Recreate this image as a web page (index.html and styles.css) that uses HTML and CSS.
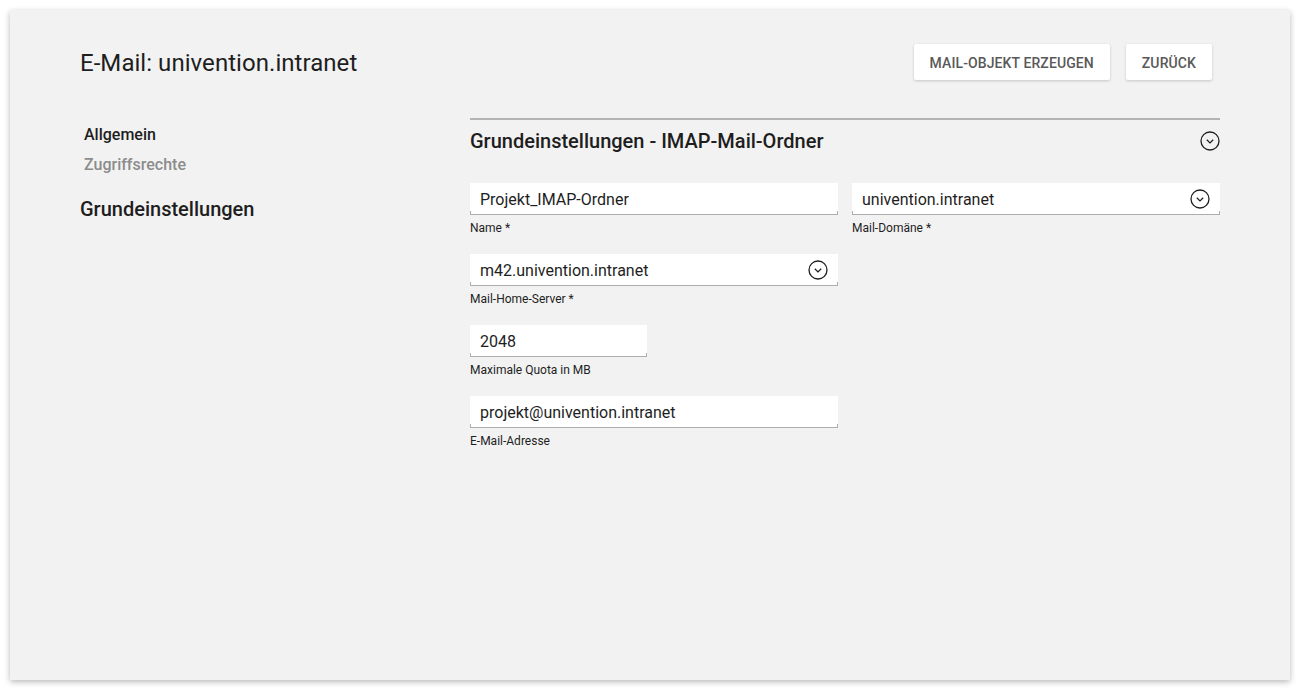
FILE: index.html
```html
<!DOCTYPE html>
<html lang="de">
<head>
<meta charset="utf-8">
<title>E-Mail: univention.intranet</title>
<link rel="stylesheet" href="styles.css">
</head>
<body>
<div class="panel">
  <header class="header">
    <h1 class="title">E-Mail: univention.intranet</h1>
    <div class="actions">
      <button class="btn">MAIL-OBJEKT ERZEUGEN</button>
      <button class="btn">ZURÜCK</button>
    </div>
  </header>
  <div class="body">
    <nav class="nav">
      <div class="nav-item active">Allgemein</div>
      <div class="nav-item">Zugriffsrechte</div>
      <div class="nav-group">Grundeinstellungen</div>
    </nav>
    <section class="section">
      <div class="section-head">
        <h2 class="section-title">Grundeinstellungen - IMAP-Mail-Ordner</h2>
        <svg class="chev" width="20" height="20" viewBox="0 0 20 20"><circle cx="10" cy="10" r="9" fill="none" stroke="#1e1e1e" stroke-width="1.3"/><path d="M6.8 8.8 L10 11.9 L13.2 8.8" fill="none" stroke="#1e1e1e" stroke-width="1.3"/></svg>
      </div>
      <div class="row">
        <div class="field wide">
          <div class="input"><span>Projekt_IMAP-Ordner</span></div>
          <div class="label">Name *</div>
        </div>
        <div class="field wide">
          <div class="input"><span>univention.intranet</span><svg class="chev" width="20" height="20" viewBox="0 0 20 20"><circle cx="10" cy="10" r="9" fill="none" stroke="#1e1e1e" stroke-width="1.3"/><path d="M6.8 8.8 L10 11.9 L13.2 8.8" fill="none" stroke="#1e1e1e" stroke-width="1.3"/></svg></div>
          <div class="label">Mail-Domäne *</div>
        </div>
      </div>
      <div class="row">
        <div class="field wide">
          <div class="input"><span>m42.univention.intranet</span><svg class="chev" width="20" height="20" viewBox="0 0 20 20"><circle cx="10" cy="10" r="9" fill="none" stroke="#1e1e1e" stroke-width="1.3"/><path d="M6.8 8.8 L10 11.9 L13.2 8.8" fill="none" stroke="#1e1e1e" stroke-width="1.3"/></svg></div>
          <div class="label">Mail-Home-Server *</div>
        </div>
      </div>
      <div class="row">
        <div class="field small">
          <div class="input"><span>2048</span></div>
          <div class="label">Maximale Quota in MB</div>
        </div>
      </div>
      <div class="row">
        <div class="field wide">
          <div class="input"><span>projekt@univention.intranet</span></div>
          <div class="label">E-Mail-Adresse</div>
        </div>
      </div>
    </section>
  </div>
</div>
</body>
</html>
```
FILE: styles.css
```css
html, body {
  margin: 0;
  padding: 0;
  background: #ffffff;
}
body {
  padding: 10px;
  font-family: Roboto, "Liberation Sans", sans-serif;
  color: #1e1e1e;
}
.panel {
  box-sizing: border-box;
  width: 1280px;
  height: 670px;
  background: #f2f2f2;
  box-shadow: 0 2px 6px rgba(0, 0, 0, 0.28);
  padding: 34px 70px 0 70px;
}
.header {
  display: flex;
  align-items: center;
  justify-content: space-between;
  height: 36px;
  padding-right: 8px;
}
.title {
  margin: 0;
  padding-top: 2px;
  font-size: 24px;
  font-weight: 400;
  line-height: 36px;
  letter-spacing: 0.05px;
  color: #1e1e1e;
}
.actions {
  display: flex;
  gap: 16px;
}
.btn {
  height: 36px;
  padding: 2px 16px 0 16px;
  border: none;
  border-radius: 2px;
  background: #ffffff;
  box-shadow: 0 1px 3px rgba(0, 0, 0, 0.18);
  font-family: Roboto, "Liberation Sans", sans-serif;
  font-size: 14px;
  font-weight: 500;
  color: #595959;
  letter-spacing: 0.1px;
}
.body {
  display: flex;
  margin-top: 38px;
}
.nav {
  width: 390px;
  flex: none;
  padding-top: 2px;
}
.nav-item {
  font-size: 16px;
  font-weight: 500;
  line-height: 30px;
  padding-left: 4px;
  color: #8c8c8c;
}
.nav-item.active {
  color: #1e1e1e;
}
.nav-group {
  margin-top: 14px;
  font-size: 20px;
  font-weight: 500;
  line-height: 30px;
  color: #1e1e1e;
}
.section {
  width: 750px;
  border-top: 2px solid #b3b3b3;
}
.section-head {
  display: flex;
  align-items: center;
  justify-content: space-between;
  height: 42px;
  margin-bottom: 21px;
}
.section-title {
  margin: 0;
  font-size: 20px;
  font-weight: 500;
  color: #1e1e1e;
}
.row {
  display: flex;
  gap: 14px;
  margin-bottom: 18px;
}
.field.wide {
  width: 368px;
}
.field.small {
  width: 177px;
}
.input {
  position: relative;
  box-sizing: border-box;
  height: 32px;
  background: #ffffff;
  border-bottom: 1px solid #adadad;
  display: flex;
  align-items: center;
  justify-content: space-between;
  padding: 2px 10px 0 10px;
  font-size: 16px;
  color: #1e1e1e;
}
.input::after {
  content: "";
  position: absolute;
  left: 0;
  right: 0;
  bottom: -1px;
  height: 4px;
  border-left: 1px solid #adadad;
  border-right: 1px solid #adadad;
}
.input .chev {
  display: block;
  margin-top: -2px;
}
.label {
  margin-top: 5px;
  font-size: 12px;
  line-height: 16px;
  color: #1e1e1e;
}
```
